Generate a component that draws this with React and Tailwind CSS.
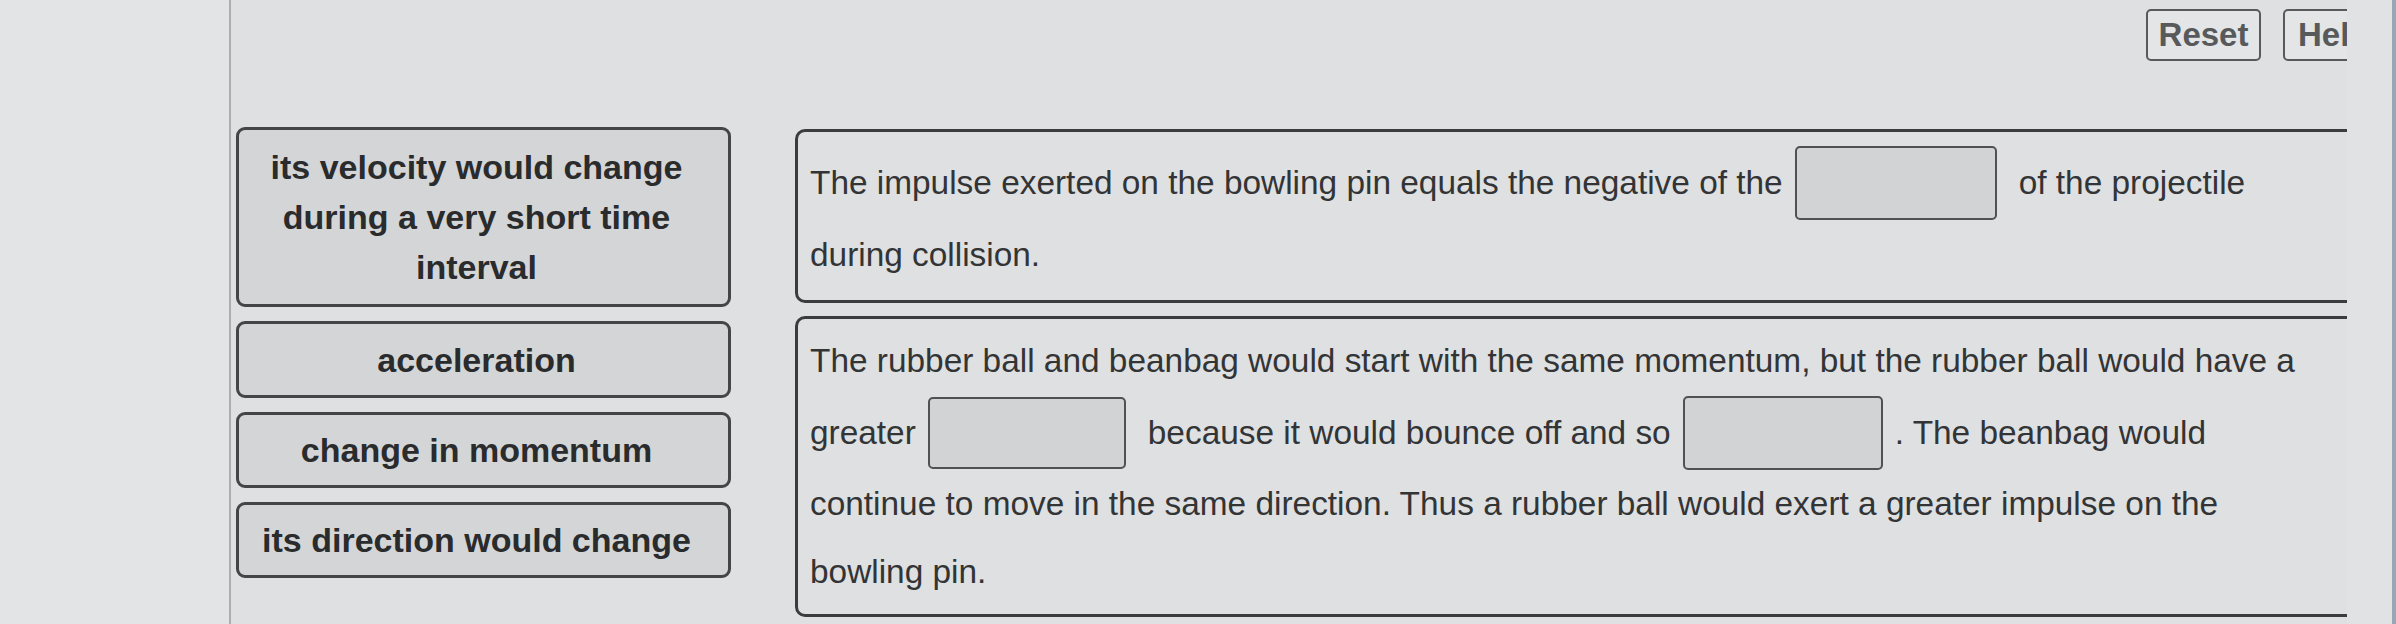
import React from "react";

const font = "font-['Liberation_Sans',Arial,Helvetica,sans-serif]";

function Card({ className, children }) {
  return (
    <div
      className={`flex items-center justify-center rounded-[9px] border-[3px] border-[#434547] bg-[#d3d5d7] pr-[14px] text-center text-[34px] font-bold leading-[50px] text-[#2a2b2c] ${className}`}
    >
      {children}
    </div>
  );
}

function Blank({ className }) {
  return (
    <span
      className={`inline-block shrink-0 rounded-[5px] border-2 border-[#4f5153] bg-[#d1d3d5] ${className}`}
    />
  );
}

function Row({ className, children }) {
  return (
    <div className={`flex items-center whitespace-pre ${className}`}>{children}</div>
  );
}

export default function App() {
  return (
    <div
      className={`${font} flex h-[624px] w-[2396px] overflow-hidden bg-[#dee0e2] text-[#333435]`}
    >
      {/* left margin panel */}
      <div className="h-full w-[231px] shrink-0 border-r-2 border-[#abadaf] bg-[#e2e4e6]" />

      {/* main app viewport */}
      <div className="flex h-full w-[2116px] shrink-0 flex-col overflow-hidden">
        {/* top toolbar */}
        <div className="flex h-[127px] shrink-0 items-start justify-end pt-[9px]">
          <button className="flex h-[52px] w-[115px] items-center justify-center rounded-[5px] border-2 border-[#58595b] bg-[#e3e5e7] text-[33px] font-bold text-[#58595b]">
            Reset
          </button>
          <button className="ml-[22px] mr-[-40px] flex h-[52px] w-[104px] items-center justify-start rounded-[5px] border-2 border-[#58595b] bg-[#e3e5e7] pl-[13px] text-[33px] font-bold text-[#58595b]">
            Help
          </button>
        </div>

        {/* content */}
        <div className="flex flex-1 items-start">
          {/* answer choices */}
          <div className="ml-[5px] flex w-[495px] shrink-0 flex-col gap-[14px]">
            <Card className="h-[180px]">
              <div>
                its velocity would change
                <br />
                during a very short time
                <br />
                interval
              </div>
            </Card>
            <Card className="h-[77px]">acceleration</Card>
            <Card className="h-[76px]">change in momentum</Card>
            <Card className="h-[76px]">its direction would change</Card>
          </div>

          {/* statements */}
          <div className="ml-[64px] mt-[2px] flex w-[1570px] shrink-0 flex-col gap-[13px] text-[33.4px]">
            <div className="h-[174px] rounded-l-[10px] border-[3px] border-[#3b3c3e] pl-[12px] pt-[15px]">
              <Row className="h-[72px]">
                <span>The impulse exerted on the bowling pin equals the negative of the</span>
                <Blank className="ml-[12px] mr-[22px] h-[74px] w-[202px]" />
                <span>of the projectile</span>
              </Row>
              <Row className="h-[72px]">
                <span>during collision.</span>
              </Row>
            </div>

            <div className="h-[301px] rounded-l-[10px] border-[3px] border-[#3b3c3e] pl-[12px] pt-[6px]">
              <Row className="h-[72px]">
                <span>
                  The rubber ball and beanbag would start with the same momentum, but the rubber ball would have a
                </span>
              </Row>
              <Row className="h-[72px]">
                <span>greater</span>
                <Blank className="ml-[12px] mr-[22px] h-[72px] w-[198px]" />
                <span>because it would bounce off and so</span>
                <Blank className="ml-[12px] mr-[12px] h-[74px] w-[200px]" />
                <span>. The beanbag would</span>
              </Row>
              <Row className="h-[70px]">
                <span>
                  continue to move in the same direction. Thus a rubber ball would exert a greater impulse on the
                </span>
              </Row>
              <Row className="h-[66px]">
                <span>bowling pin.</span>
              </Row>
            </div>
          </div>
        </div>
      </div>

      {/* right edge of screen */}
      <div className="flex h-full flex-1 justify-end bg-[#e0e2e4]">
        <div className="h-full w-[4px] bg-[#9aa6b6]" />
      </div>
    </div>
  );
}
